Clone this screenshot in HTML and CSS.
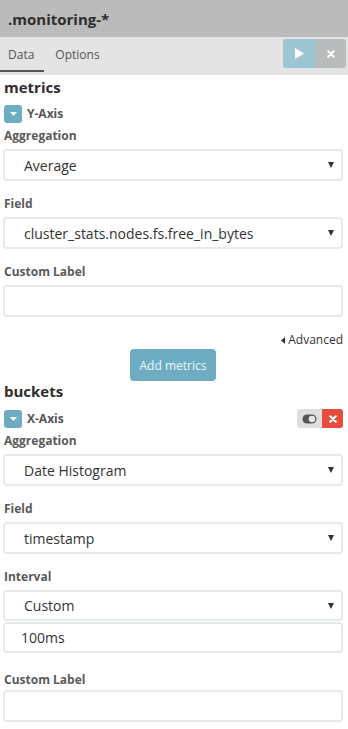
FILE: index.html
```html
<!DOCTYPE html>
<html>
<head>
<meta charset="utf-8">
<link rel="stylesheet" href="styles.css">
</head>
<body>
<div class="panel">
  <header class="title">.monitoring-*</header>
  <nav class="tabs">
    <span class="tab active">Data</span>
    <span class="tab">Options</span>
    <div class="actions">
      <span class="btn-play"><svg width="9" height="11" viewBox="0 0 9 11"><path d="M0 0 L9 5.5 L0 11 Z" fill="#fff"/></svg></span>
      <span class="btn-close"><svg width="8" height="8" viewBox="0 0 8 8"><path d="M1.3 1.3 L6.7 6.7 M6.7 1.3 L1.3 6.7" stroke="#fff" stroke-width="2.2" stroke-linecap="round"/></svg></span>
    </div>
  </nav>
  <div class="content">
    <h2 class="section">metrics</h2>
    <div class="agg-head">
      <span class="caret-btn"><svg width="7" height="4" viewBox="0 0 7 4"><path d="M0 0 H7 L3.5 4 Z" fill="#fff"/></svg></span>
      <span class="agg-title">Y-Axis</span>
    </div>
    <label class="lbl first">Aggregation</label>
    <div class="select"><span>Average</span><svg class="arrow" width="6" height="6" viewBox="0 0 6 6"><path d="M0 0 H6 L3 6 Z" fill="#333"/></svg></div>
    <label class="lbl">Field</label>
    <div class="select"><span>cluster_stats.nodes.fs.free_in_bytes</span><svg class="arrow" width="6" height="6" viewBox="0 0 6 6"><path d="M0 0 H6 L3 6 Z" fill="#333"/></svg></div>
    <label class="lbl">Custom Label</label>
    <input class="input" type="text" value="">
    <div class="advanced"><svg width="4" height="7" viewBox="0 0 4 7"><path d="M4 0 V7 L0 3.5 Z" fill="#333"/></svg>Advanced</div>
    <div class="add-row"><span class="add-btn">Add metrics</span></div>
    <h2 class="section next">buckets</h2>
    <div class="agg-head wide">
      <span class="caret-btn"><svg width="7" height="4" viewBox="0 0 7 4"><path d="M0 0 H7 L3.5 4 Z" fill="#fff"/></svg></span>
      <span class="agg-title">X-Axis</span>
      <div class="agg-ctrls">
        <span class="ctrl-toggle"><svg width="15" height="10" viewBox="0 0 15 10"><rect x="0.5" y="0.5" width="14" height="9" rx="4.5" fill="#555"/><circle cx="10" cy="5" r="3.3" fill="#e6e6e6"/></svg></span>
        <span class="ctrl-remove"><svg width="8" height="8" viewBox="0 0 8 8"><path d="M1.3 1.3 L6.7 6.7 M6.7 1.3 L1.3 6.7" stroke="#fff" stroke-width="2.2" stroke-linecap="round"/></svg></span>
      </div>
    </div>
    <label class="lbl first">Aggregation</label>
    <div class="select"><span>Date Histogram</span><svg class="arrow" width="6" height="6" viewBox="0 0 6 6"><path d="M0 0 H6 L3 6 Z" fill="#333"/></svg></div>
    <label class="lbl">Field</label>
    <div class="select"><span>timestamp</span><svg class="arrow" width="6" height="6" viewBox="0 0 6 6"><path d="M0 0 H6 L3 6 Z" fill="#333"/></svg></div>
    <label class="lbl">Interval</label>
    <div class="select short"><span>Custom</span><svg class="arrow" width="6" height="6" viewBox="0 0 6 6"><path d="M0 0 H6 L3 6 Z" fill="#333"/></svg></div>
    <input class="input short stacked" type="text" value="100ms">
    <label class="lbl spaced">Custom Label</label>
    <input class="input" type="text" value="">
  </div>
</div>
</body>
</html>
```
FILE: styles.css
```css
* { box-sizing: border-box; }
html, body { margin: 0; padding: 0; background: #fff; }
body { font-family: "Open Sans", "DejaVu Sans", sans-serif; color: #333; width: 348px; }

.title {
  height: 37px;
  background: #bbbbbb;
  display: flex;
  align-items: center;
  padding-left: 8px;
  font-size: 15px;
  font-weight: 700;
  color: #2d2d2d;
}

.tabs {
  height: 38px;
  background: #e4e4e4;
  display: flex;
  align-items: stretch;
  padding-bottom: 3px;
}
.tab {
  display: flex;
  align-items: center;
  padding: 2px 10px 0 8px;
  font-size: 12px;
  color: #555;
  border-bottom: 2px solid transparent;
}
.tab + .tab { padding-left: 11px; }
.tab.active { border-bottom-color: #555; }

.actions {
  margin-left: auto;
  margin-top: 2px;
  margin-right: 2px;
  height: 29px;
  display: flex;
  border-radius: 3px;
  overflow: hidden;
}
.btn-play, .btn-close {
  display: flex;
  align-items: center;
  justify-content: center;
}
.btn-play { width: 32px; background: #9cc6d3; }
.btn-close { width: 31px; background: #b8bcbc; }

.content { padding: 0 5px 0 3px; }

.section {
  margin: 2px 0 0 1px;
  font-size: 15px;
  line-height: 20px;
  font-weight: 700;
  color: #2d2d2d;
}
.section.next { margin-top: 0; }

.agg-head {
  margin-top: 7px;
  height: 19px;
  display: flex;
  align-items: center;
}
.agg-head.wide { margin-top: 8px; }
.caret-btn {
  width: 18px;
  height: 18px;
  margin-left: 1px;
  background: #6eadc1;
  border-radius: 3px;
  display: flex;
  align-items: center;
  justify-content: center;
}
.agg-title {
  margin-left: 5px;
  font-size: 12px;
  font-weight: 700;
  color: #555;
}
.agg-ctrls {
  margin-left: auto;
  display: flex;
  height: 19px;
  border-radius: 3px;
  overflow: hidden;
}
.ctrl-toggle, .ctrl-remove { display: flex; align-items: center; justify-content: center; }
.ctrl-toggle { width: 25px; background: #dedede; }
.ctrl-remove { width: 21px; background: #e74c3c; }

.lbl {
  display: block;
  margin: 14px 0 4px 1px;
  font-size: 12px;
  line-height: 18px;
  font-weight: 700;
  color: #5a5a5a;
}
.lbl.first { margin-top: 4px; }
.lbl.spaced { margin-top: 18px; margin-bottom: 1px; }

.select, .input {
  display: flex;
  align-items: center;
  width: 100%;
  height: 32px;
  border: 2px solid #e6eaea;
  border-radius: 4px;
  background: #fff;
  font-family: inherit;
  font-size: 14px;
  color: #333;
}
.select { padding: 0 7px 0 19px; }
.select span { flex: 1; }
.select .arrow { flex: none; }
.input { padding: 0 0 0 16px; outline: none; margin: 0; }
.short { height: 31px; }
.stacked { margin-top: 1px; }

.advanced {
  margin-top: 14px;
  display: flex;
  align-items: center;
  justify-content: flex-end;
  gap: 3px;
  font-size: 12px;
  line-height: 18px;
  color: #333;
}

.add-row { display: flex; justify-content: center; }
.add-btn {
  width: 86px;
  height: 32px;
  background: #6eadc1;
  border-radius: 4px;
  color: #eef6f8;
  font-size: 12px;
  display: flex;
  align-items: center;
  justify-content: center;
}
```
